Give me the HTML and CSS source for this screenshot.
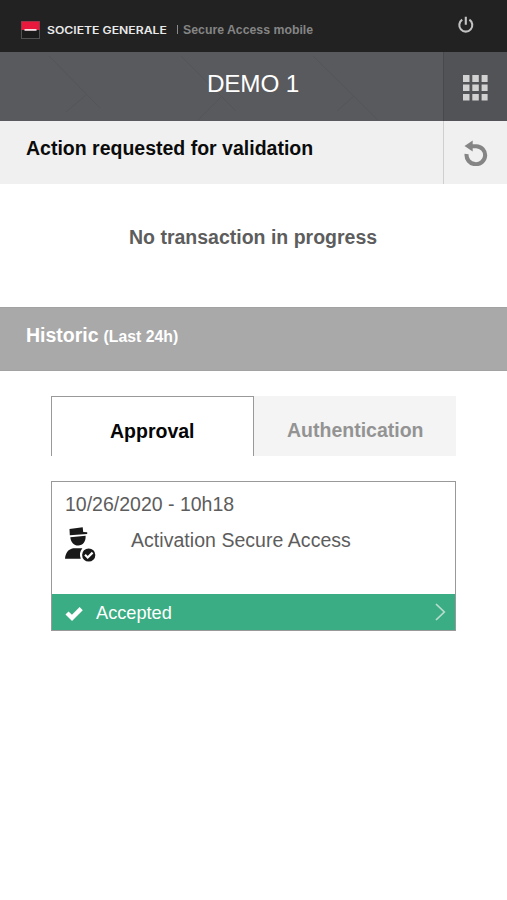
FILE: index.html
```html
<!DOCTYPE html>
<html lang="en">
<head>
<meta charset="utf-8">
<meta name="viewport" content="width=device-width, initial-scale=1">
<title>Secure Access mobile</title>
<link rel="stylesheet" href="styles.css">
</head>
<body>
<header class="brand-bar">
  <svg class="logo" width="19" height="18" viewBox="0 0 19 18" aria-hidden="true">
    <rect x=".5" y=".5" width="18" height="17" fill="#1b1b1b" stroke="#515151"/>
    <rect x=".5" y=".5" width="18" height="8.5" fill="#e9193d"/>
    <rect x="3.5" y="8" width="12" height="1.8" fill="#f4dfe3"/>
  </svg>
  <span class="brand">SOCIETE GENERALE</span>
  <span class="divider"></span>
  <span class="product">Secure Access mobile</span>
  <svg class="power" width="18" height="18" viewBox="0 0 18 18" aria-label="Log out">
    <path d="M5.2 3.7A6.5 6.5 0 1 0 12.4 3.7M8.8 .7V8.8" fill="none" stroke="#c2c2c2" stroke-width="2.1"/>
  </svg>
</header>
<div class="title-bar">
  <svg class="pattern" width="443" height="69" viewBox="0 0 443 69" aria-hidden="true">
    <path d="M49 4 100 56M86 43 66 60M181 4 236 59M221 45 198 68M313 4 378 68M354 44 337 59" fill="none" stroke="#545558"/>
  </svg>
  <h1 class="title">DEMO 1</h1>
  <div class="menu">
    <svg class="grid-icon" width="26" height="26" viewBox="0 0 26 26" aria-label="Menu">
      <path d="M0 0h6.5v7H0zM9.3 0h6.5v7H9.3zM18.6 0h6v7h-6zM0 9.5h6.5v6.6H0zM9.3 9.5h6.5v6.6H9.3zM18.6 9.5h6v6.6h-6zM0 19h6.5v6.6H0zM9.3 19h6.5v6.6H9.3zM18.6 19h6v6.6h-6z" fill="#d2d2d3"/>
    </svg>
  </div>
</div>
<section class="action-bar">
  <h2 class="action-title">Action requested for validation</h2>
  <div class="refresh">
    <svg class="refresh-icon" width="25" height="26" viewBox="0 0 25 26" aria-label="Refresh">
      <path d="M7 6.2H12.2a9.3 9 0 1 1-9.6 7.9" fill="none" stroke="#858585" stroke-width="4.1"/>
      <path d="M.5 6 8.7 .4V11.6Z" fill="#858585"/>
    </svg>
  </div>
</section>
<p class="empty"><span class="empty-text">No transaction in progress</span></p>
<h2 class="historic"><span class="historic-main">Historic</span><span class="period">(Last 24h)</span></h2>
<main class="content">
  <nav class="tabs">
    <div class="tab active"><span class="approval">Approval</span></div>
    <div class="tab"><span class="authentication">Authentication</span></div>
  </nav>
  <article class="card">
    <div class="details">
      <div class="date"><span class="date-text">10/26/2020 - 10h18</span></div>
      <div class="operation">
        <svg class="agent" width="31" height="35" viewBox="0 0 31 35" aria-hidden="true">
          <path d="M4.5 2 17.7.3 18.2 5l4 .3v1.8L4.8 8.3Z" fill="#191919"/>
          <path d="M5.3 10.2 20.6 8.8C21 14.5 17.9 18.5 13.2 18.5 8.8 18.5 5.7 15 5.3 10.2Z" fill="#191919"/>
          <path d="M0 31.7C.5 25.7 3.5 22 8.2 21.2h9.2c-2.7 3-3.1 6.9-1.6 10.5Z" fill="#191919"/>
          <circle cx="23.7" cy="28" r="6.6" fill="#191919"/>
          <path d="m20 27.8 2.7 2.7 4.9-4.9" fill="none" stroke="#fff" stroke-width="2.2"/>
        </svg>
        <span class="operation-text">Activation Secure Access</span>
      </div>
    </div>
    <div class="status">
      <svg class="check" width="18" height="15" viewBox="0 0 18 15" aria-hidden="true"><path d="m2 7 5 4.8 9.2-9.2" fill="none" stroke="#fff" stroke-width="4.4"/></svg>
      <span class="status-text">Accepted</span>
      <svg class="chevron" width="11" height="18" viewBox="0 0 11 18" aria-hidden="true"><path d="m1 1 8.3 8L1 17" fill="none" stroke="#b9ddce" stroke-width="1.7"/></svg>
    </div>
  </article>
</main>
</body>
</html>
```
FILE: styles.css
```css
* { box-sizing: border-box; }
body { margin: 0; min-height: 900px; background: #fff; font-family: "Liberation Sans", Arial, sans-serif; color: #5d5d5d; }
h1, h2, p { margin: 0; }
svg { display: block; flex: none; }
span { white-space: nowrap; }
.brand-bar { display: flex; height: 52px; padding-left: 21px; background: #222; }
.logo { margin-top: 21px; }
.brand { width: 120px; margin: 23px 0 0 7px; color: #e9e9e9; font: 600 10px/14px Inter, sans-serif; transform: scaleX(1.22); transform-origin: left; }
.divider { width: 1px; height: 9px; margin: 25px 5px 0 10px; background: #8b8b8b; }
.product { margin-top: 22px; color: #858585; font-size: 12.3px; line-height: 16px; font-weight: 700; }
.power { margin: 16px 32px 0 auto; }
.title-bar { display: grid; grid-template-columns: 443px 64px; height: 69px; background: #595a5d; }
.pattern, .title { grid-area: 1 / 1; }
.title { padding: 18px 0 0 207px; color: #fff; font-size: 24.3px; line-height: 28px; font-weight: 400; letter-spacing: -.2px; }
.menu { border-left: 1px solid #48494b; background: #525356; padding: 23px 0 0 19px; }
.action-bar { display: flex; height: 63px; background: #f0f0f0; }
.action-title { width: 443px; padding: 16px 0 0 26px; color: #0b0b0b; font-size: 19.5px; line-height: 22px; }
.refresh { width: 64px; border-left: 1px solid #cfcfcf; padding: 19px 0 0 20px; }
.empty { height: 123px; padding: 42px 0 0 129px; font-size: 19.5px; line-height: 22px; font-weight: 700; }
.historic { display: flex; align-items: baseline; height: 64px; padding: 16px 0 0 26px; background: #a9a9a9; border: 1px solid #a2a2a2; border-width: 1px 0; color: #fff; font-size: 19.5px; line-height: 22px; }
.period { margin-left: 5px; font-size: 15.8px; }
.content { width: 405px; margin: 25px 0 0 51px; }
.tabs { display: grid; grid-template-columns: 203px 202px; height: 60px; }
.tab { background: #f4f4f4; color: #939393; font-size: 19.5px; line-height: 22px; font-weight: 700; padding: 23px 0 0 33px; }
.active { background: #fff; border: 1px solid #999; border-bottom: 0; color: #050505; padding-left: 58px; }
.card { height: 150px; margin-top: 25px; border: 1px solid #999; }
.details { height: 112px; padding: 11px 0 0 13px; font-size: 19.5px; line-height: 22px; }
.operation { display: flex; margin-top: 12px; }
.operation-text { margin: 2px 0 0 35px; letter-spacing: .04px; }
.status { display: flex; height: 36px; padding: 12px 9px 0 13px; background: #3bad84; color: #fff; font-size: 18.2px; }
.status-text { margin: -3px 0 0 13px; line-height: 20px; }
.chevron { margin: -3px 0 0 auto; }
```
